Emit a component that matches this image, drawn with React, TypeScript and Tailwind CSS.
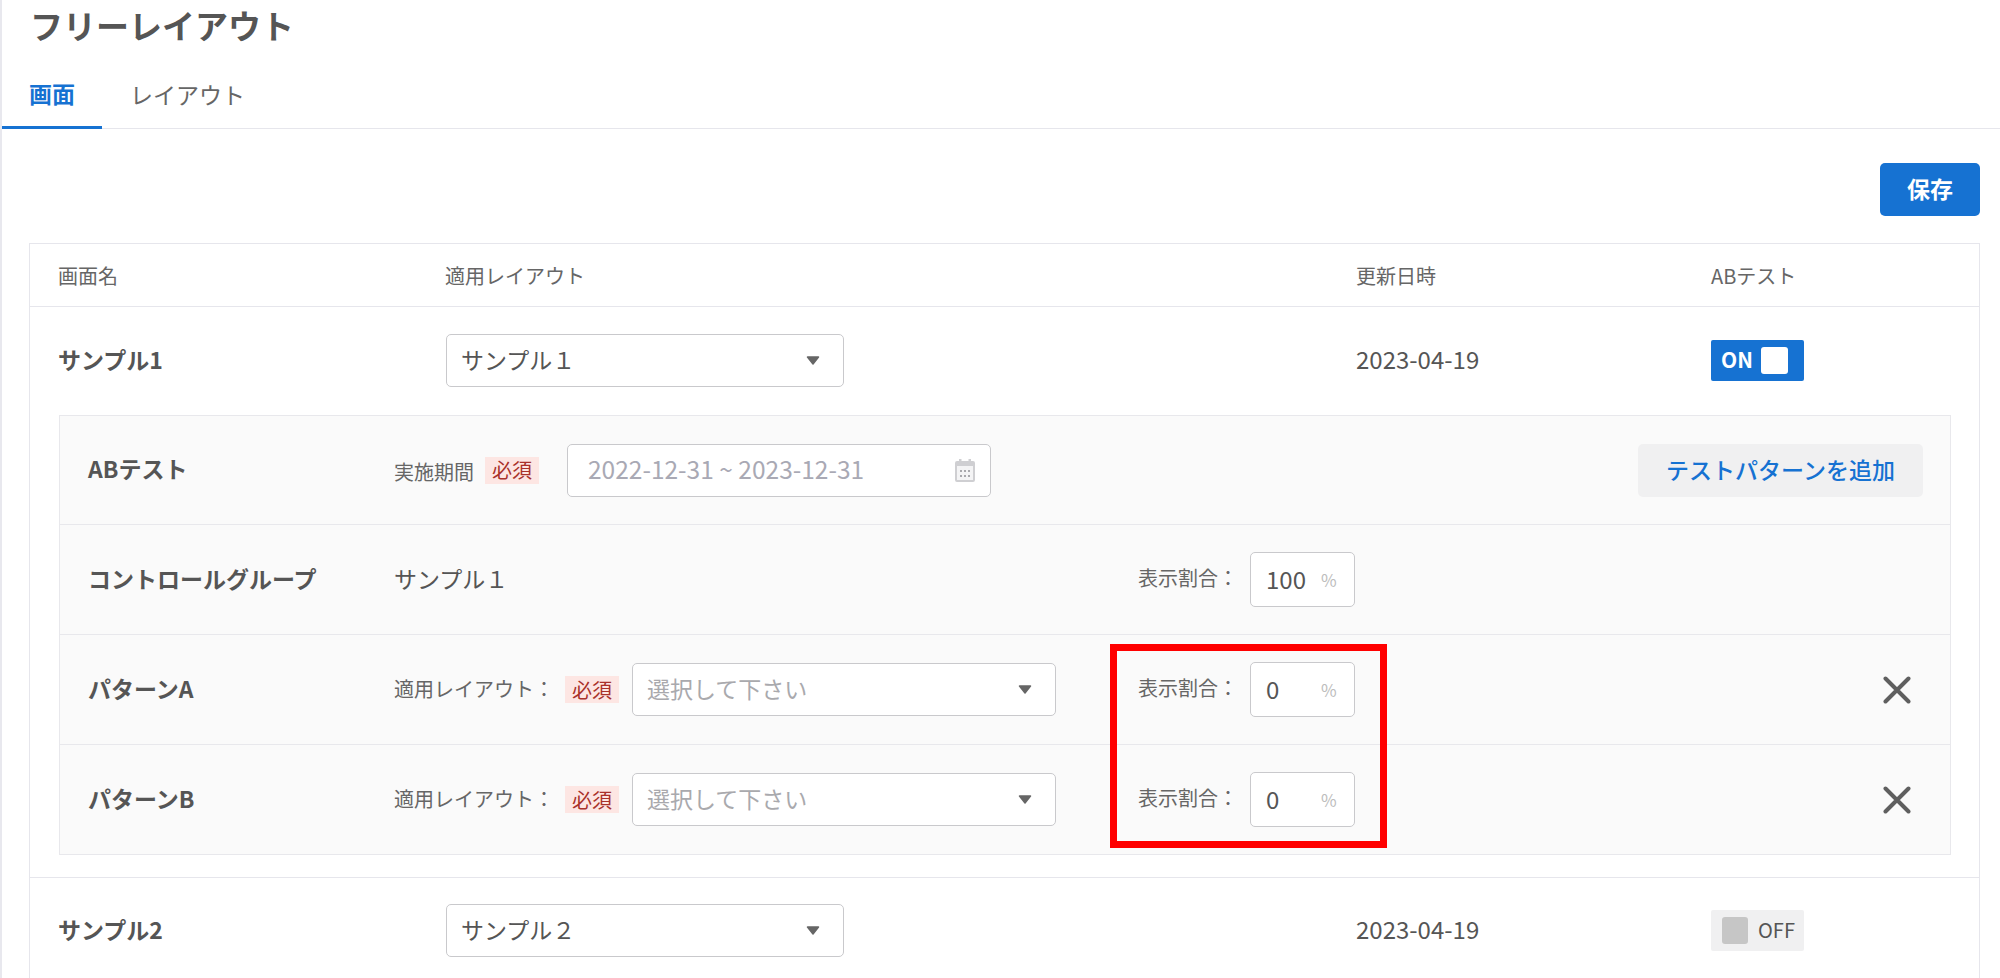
const FONT = "font-['Noto_Sans_CJK_JP','Noto_Sans',sans-serif]";

function Caret() {
  return (
    <svg width="14" height="9" viewBox="0 0 14 9" className="shrink-0">
      <path d="M1.5 1h11L7 8z" fill="#666" stroke="#666" strokeWidth="1.5" strokeLinejoin="round" />
    </svg>
  );
}

function Select({ value, placeholder, narrow }: { value: string; placeholder?: boolean; narrow?: boolean }) {
  return (
    <div className={`flex items-center justify-between ${narrow ? 'w-[398px]' : 'w-[424px]'} h-[53px] pl-[14px] pr-[23px] bg-white border border-[#c9c9cc] rounded-[5px]`}>
      <span className={`mb-[3px] text-[23px] ${placeholder ? 'text-[#a9a9ad]' : 'text-[#555]'}`}>{value}</span>
      <Caret />
    </div>
  );
}

function Required() {
  return (
    <span className="flex items-center justify-center w-[54px] h-[27px] bg-[#fde6e3] text-[#a9322a] text-[20px] leading-none">必須</span>
  );
}

function Percent({ value }: { value: string }) {
  return (
    <div className="flex items-center gap-2 ml-[18px] w-[105px] h-[55px] pl-[15px] bg-white border border-[#c9c9cc] rounded-[5px]">
      <span className="w-[47px] mb-[2px] text-[24px] text-[#555]">{value}</span>
      <span className="text-[17px] text-[#bdbdbd]">%</span>
    </div>
  );
}

function RateField({ value }: { value: string }) {
  return (
    <div className="flex items-center">
      <span className="w-[94px] mb-[3px] text-[20px] text-[#666] whitespace-nowrap">表示割合：</span>
      <Percent value={value} />
    </div>
  );
}

function CloseIcon() {
  return (
    <svg width="28" height="28" viewBox="0 0 28 28">
      <path d="M2.5 2.5l23 23M25.5 2.5l-23 23" stroke="#5f5f5f" strokeWidth="4" strokeLinecap="round" />
    </svg>
  );
}

function CalendarIcon() {
  return (
    <svg width="20" height="24" viewBox="0 0 20 24">
      <path d="M2 3h2V1h2.5v2h7V1H16v2h2a2 2 0 0 1 2 2v17a2 2 0 0 1-2 2H2a2 2 0 0 1-2-2V5a2 2 0 0 1 2-2z" fill="#cfcfd2" />
      <rect x="2" y="8" width="16" height="14" fill="#f4f4f5" />
      <g fill="#a9a9ad">
        <rect x="5" y="12" width="2" height="2" />
        <rect x="9" y="12" width="2" height="2" />
        <rect x="13" y="12" width="2" height="2" />
        <rect x="5" y="17" width="2" height="2" />
        <rect x="9" y="17" width="2" height="2" />
        <rect x="13" y="17" width="2" height="2" />
      </g>
    </svg>
  );
}

function PatternRow({ name }: { name: string }) {
  return (
    <div className="flex items-center h-[110px] pl-[28px] border-t border-[#e8e8ec]">
      <span className="w-[306px] mb-[3px] text-[23px] font-bold text-[#555]">{name}</span>
      <span className="w-[171px] mb-[1px] text-[20px] text-[#666] whitespace-nowrap">適用レイアウト：</span>
      <Required />
      <span className="w-[13px]" />
      <Select value="選択して下さい" placeholder />
      <span className="w-[82px]" />
      <RateField value="0" />
      <span className="ml-[528px]"><CloseIcon /></span>
    </div>
  );
}

function ListRow({ name, value, date, on }: { name: string; value: string; date: string; on: boolean }) {
  return (
    <div className="grid grid-cols-[388px_910px_355px_1fr] items-center">
      <span className="mb-[3px] text-[23px] font-bold text-[#555]">{name}</span>
      <Select value={value} narrow />
      <span className="mb-[3px] text-[24px] text-[#555]">{date}</span>
      {on ? (
        <div className="flex items-center justify-between w-[93px] h-[41px] pl-[10px] pr-[16px] bg-[#1672d2] rounded-[2px]">
          <span className="mb-[2px] text-[21px] font-bold text-white">ON</span>
          <span className="w-[27px] h-[27px] bg-white rounded-[3px]" />
        </div>
      ) : (
        <div className="flex items-center w-[93px] h-[41px] pl-[11px] bg-[#f0f0f1] rounded-[2px]">
          <span className="w-[26px] h-[27px] bg-[#c6c6c6] rounded-[3px]" />
          <span className="ml-[10px] mb-[2px] text-[20px] text-[#555]">OFF</span>
        </div>
      )}
    </div>
  );
}

export default function App() {
  return (
    <div className={`${FONT} relative h-[978px] w-[2000px] overflow-hidden bg-white border-l-2 border-[#e8e8ee]`}>
      <h1 className="pl-[28px] h-[52px] flex items-center text-[33px] font-bold text-[#555]">フリーレイアウト</h1>

      <div className="flex h-[77px] border-b border-[#e6e6ec]">
        <div className="flex items-center justify-center w-[100px] h-[77px] pt-[8px] border-b-[3px] border-[#1672d2] text-[23px] font-bold text-[#1672d2]">画面</div>
        <div className="flex items-center pl-[28px] pt-[8px] text-[23px] text-[#666]">レイアウト</div>
      </div>

      <div className="pl-[27px] pr-[20px]">
        <div className="flex justify-end pt-[34px] pb-[27px]">
          <button className="w-[100px] h-[53px] pb-[2px] bg-[#1672d2] rounded-[5px] text-[23px] font-bold text-white">保存</button>
        </div>

        <div className="grid grid-cols-[387px_911px_355px_1fr] items-center h-[64px] pl-[28px] pt-[2px] border border-[#e6e6ec] text-[20px] text-[#666]">
          <span>画面名</span>
          <span>適用レイアウト</span>
          <span>更新日時</span>
          <span>ABテスト</span>
        </div>

        <div className="border-x border-[#e6e6ec]">
          <div className="pl-[28px] pr-[29px] pt-[27px] pb-[22px] border-b border-[#e6e6ec]">
            <ListRow name="サンプル1" value="サンプル１" date="2023-04-19" on />

            <div className="ml-[1px] -mr-[1px] mt-[28px] bg-[#fafafa] border border-[#e8e8ec]">
              <div className="flex items-center h-[108px] pl-[28px] pr-[27px]">
                <span className="w-[306px] mb-[3px] text-[23px] font-bold text-[#555]">ABテスト</span>
                <span className="w-[91px] mt-[3px] text-[20px] text-[#666]">実施期間</span>
                <Required />
                <div className="flex items-center justify-between ml-[28px] w-[424px] h-[53px] pl-[20px] pr-[15px] bg-white border border-[#c9c9cc] rounded-[5px]">
                  <span className="mb-[2px] text-[24.5px] text-[#a9a9b4]">2022-12-31 ~ 2023-12-31</span>
                  <CalendarIcon />
                </div>
                <button className="ml-auto w-[285px] h-[53px] pb-[2px] bg-[#f0f0f1] rounded-[5px] text-[23px] font-medium text-[#1672d2]">テストパターンを追加</button>
              </div>

              <div className="flex items-center h-[110px] pl-[28px] border-t border-[#e8e8ec]">
                <span className="w-[306px] mb-[3px] text-[23px] font-bold text-[#555]">コントロールグループ</span>
                <span className="w-[744px] mb-[2px] text-[23px] text-[#555]">サンプル１</span>
                <RateField value="100" />
              </div>

              <PatternRow name="パターンA" />
              <PatternRow name="パターンB" />
            </div>
          </div>

          <div className="pl-[28px] pr-[29px] pt-[26px]">
            <ListRow name="サンプル2" value="サンプル２" date="2023-04-19" on={false} />
          </div>
          <div className="h-[60px]" />
        </div>
      </div>

      <div className="absolute left-[1108px] top-[644px] w-[277px] h-[204px] border-[7px] border-[#ff0000]" />
    </div>
  );
}
